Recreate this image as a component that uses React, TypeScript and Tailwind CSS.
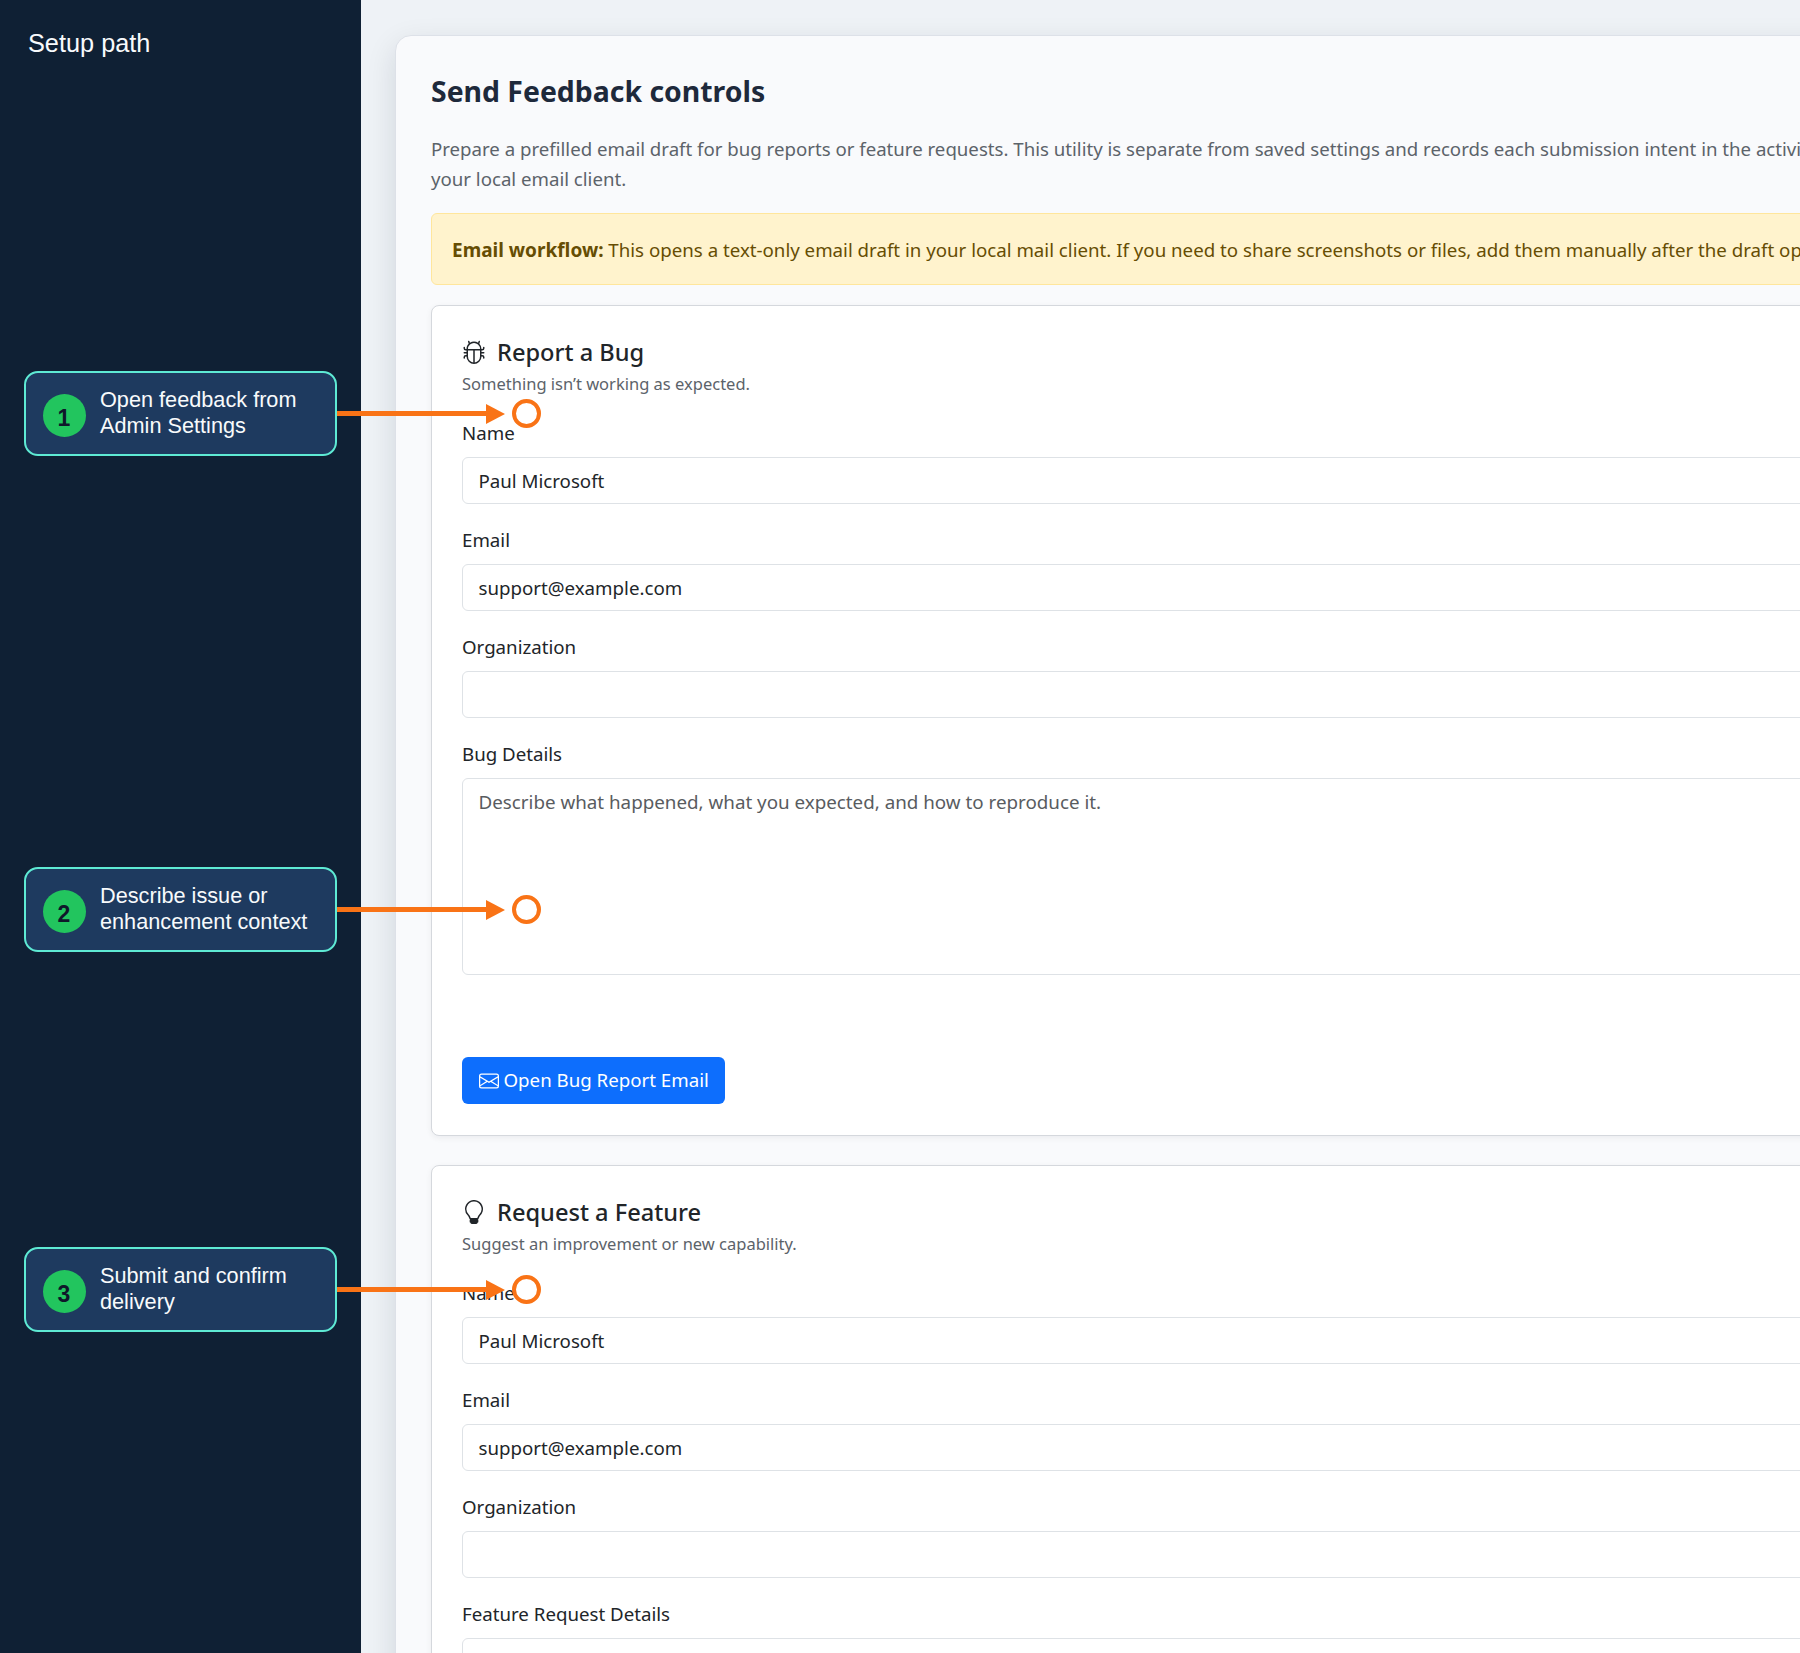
import React from "react";
import { BsBug, BsEnvelope, BsLightbulb } from "react-icons/bs";

type Step = {
  n: number;
  lines: [string, string];
  top: string;
};

const steps: Step[] = [
  { n: 1, lines: ["Open feedback from", "Admin Settings"], top: "top-[371px]" },
  { n: 2, lines: ["Describe issue or", "enhancement context"], top: "top-[867px]" },
  { n: 3, lines: ["Submit and confirm", "delivery"], top: "top-[1247px]" },
];

function Callout({ step }: { step: Step }) {
  return (
    <>
      <div className={`absolute left-[24px] ${step.top} z-10 flex h-[85px] w-[313px] items-center gap-[14.5px] rounded-[14px] border-2 border-[#5eead4] bg-[#1e3a5f] pl-[16.5px]`}>
        <div className="mt-[3px] flex h-[43px] w-[43px] shrink-0 items-center justify-center rounded-full bg-[#22c55e] pt-[7px] text-[23px] leading-none font-bold text-[#0f172a]">
          {step.n}
        </div>
        <div className="mt-[-1px] text-[21.7px] leading-[26px] text-[#f8fafc]">
          <div>{step.lines[0]}</div>
          <div>{step.lines[1]}</div>
        </div>
      </div>
      {/* arrow + target ring, same vertical middle as the callout */}
      <div className={`absolute left-[337px] ${step.top} z-10 flex h-[85px] items-center`}>
        <div className="h-[5px] w-[149px] bg-[#f97316]" />
        <div className="h-0 w-0 border-y-[10.5px] border-l-[19px] border-y-transparent border-l-[#f97316]" />
        <div className="ml-[7px] h-[29px] w-[29px] rounded-full border-[4.5px] border-[#f97316]" />
      </div>
    </>
  );
}

function Field({ label, value }: { label: string; value?: string }) {
  return (
    <div className="mb-[22px]">
      <label className="mb-[11px] block text-[18.7px] leading-[27px] text-[#212529]">{label}</label>
      <div className="h-[47px] rounded-[6px] border border-[#dee2e6] bg-white px-[15.5px] text-[18.7px] leading-[45px] text-[#212529]">
        {value}
      </div>
    </div>
  );
}

function FormCard({
  icon,
  title,
  sub,
  detailsLabel,
  placeholder,
  button,
}: {
  icon: React.ReactNode;
  title: string;
  sub: string;
  detailsLabel: string;
  placeholder: string;
  button?: string;
}) {
  return (
    <section className="mb-[29px] rounded-[8px] border border-[#d5d8dd] bg-white px-[30px] pb-[31px] pt-[28px] shadow-[0_2px_6px_rgba(15,23,42,0.06)]">
      <div className="flex items-center gap-[11px] text-[#212529]">
        {icon}
        <h3 className="text-[23.6px] font-medium leading-[36px]">{title}</h3>
      </div>
      <p className="mt-[2px] mb-[23px] text-[16.5px] leading-[24px] text-[#5c636a]">{sub}</p>
      <Field label="Name" value="Paul Microsoft" />
      <Field label="Email" value="support@example.com" />
      <Field label="Organization" />
      <div className="mb-[82px]">
        <label className="mb-[11px] block text-[18.7px] leading-[27px] text-[#212529]">{detailsLabel}</label>
        <div className="h-[197px] rounded-[6px] border border-[#dee2e6] bg-white px-[15.5px] py-[9.5px] text-[18.8px] leading-[27px] text-[#595c5f]">
          {placeholder}
        </div>
      </div>
      {button && (
        <button className="flex h-[47px] items-center gap-[5px] rounded-[6px] bg-[#0d6efd] px-[16.5px] text-[18.7px] text-white">
          <BsEnvelope className="h-[20px] w-[20px]" />
          {button}
        </button>
      )}
    </section>
  );
}

export default function App() {
  return (
    <div className="relative flex h-[1653px] w-[1800px] overflow-hidden bg-[#eef2f6] font-['Noto_Sans',sans-serif]">
      <aside className="h-full w-[361px] shrink-0 bg-[#0f2034] px-[28px] pt-[27px] font-['Liberation_Sans',sans-serif]">
        <h2 className="text-[25.3px] leading-[32px] text-[#f8fafc]">Setup path</h2>
      </aside>
      {steps.map((s) => (
        <div key={s.n} className="font-['Liberation_Sans',sans-serif]">
          <Callout step={s} />
        </div>
      ))}
      <main className="min-w-0 flex-1 pl-[34px] pt-[35px]">
        <div className="w-[1760px] rounded-[16px] border border-[#dde1e8] bg-[#f9fafc] px-[35px] pt-[34px] shadow-[0_10px_30px_rgba(15,23,42,0.12)]">
          <h1 className="mb-[22px] text-[28.4px] font-bold leading-[42px] text-[#1e293b]">Send Feedback controls</h1>
          <p className="mb-[19px] whitespace-nowrap text-[18.65px] leading-[30px] text-[#5c636a]">
            Prepare a prefilled email draft for bug reports or feature requests. This utility is separate from saved settings and records each submission intent in the activity log before opening
            <br />
            your local email client.
          </p>
          <div className="mb-[20px] h-[72px] whitespace-nowrap rounded-[6px] border border-[#ffe69c] bg-[#fff3cd] px-[20px] text-[18.7px] leading-[71px] text-[#664d03]">
            <strong className="text-[19px] font-bold">Email workflow:</strong> This opens a text-only email draft in your local mail client. If you need to share screenshots or files, add them manually after the draft opens.
          </div>
          <FormCard
            icon={<BsBug className="h-[24px] w-[24px]" />}
            title="Report a Bug"
            sub="Something isn’t working as expected."
            detailsLabel="Bug Details"
            placeholder="Describe what happened, what you expected, and how to reproduce it."
            button="Open Bug Report Email"
          />
          <FormCard
            icon={<BsLightbulb className="h-[24px] w-[24px]" />}
            title="Request a Feature"
            sub="Suggest an improvement or new capability."
            detailsLabel="Feature Request Details"
            placeholder=""
          />
        </div>
      </main>
    </div>
  );
}
